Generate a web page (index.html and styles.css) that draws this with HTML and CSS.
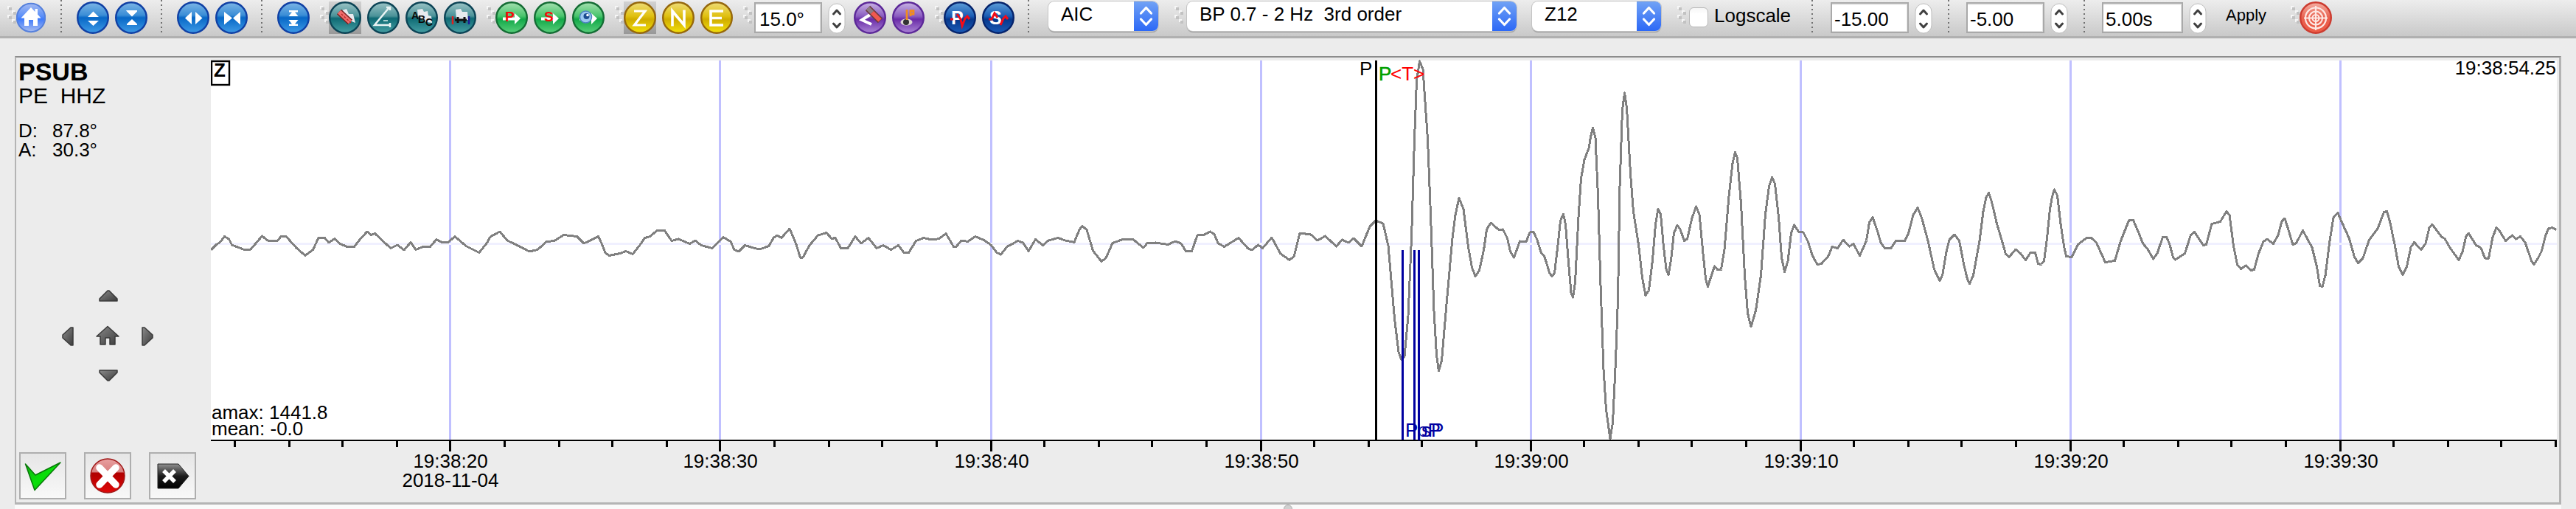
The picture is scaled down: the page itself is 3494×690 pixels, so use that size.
FILE: index.html
```
<!DOCTYPE html>
<html lang="en">
<head>
<meta charset="utf-8">
<title>PSUB - Picker</title>
<link rel="stylesheet" href="styles.css">
</head>
<body>
<svg class="defs" width="0" height="0" aria-hidden="true">
  <defs>
    <linearGradient id="gBlue" x1="0" y1="0" x2="0" y2="1"><stop offset="0" stop-color="#7db6e6"/><stop offset=".42" stop-color="#3a8dd6"/><stop offset=".5" stop-color="#0767c6"/><stop offset="1" stop-color="#3f9be6"/></linearGradient>
    <linearGradient id="gHome" x1="0" y1="0" x2="0" y2="1"><stop offset="0" stop-color="#a3baf2"/><stop offset=".45" stop-color="#5b8ff8"/><stop offset=".55" stop-color="#3f7bfb"/><stop offset="1" stop-color="#a9bdf0"/></linearGradient>
    <linearGradient id="gTeal" x1="0" y1="0" x2="0" y2="1"><stop offset="0" stop-color="#9cc4c6"/><stop offset=".45" stop-color="#4a9298"/><stop offset=".52" stop-color="#0e6a74"/><stop offset="1" stop-color="#47a0a4"/></linearGradient>
    <linearGradient id="gGreen" x1="0" y1="0" x2="0" y2="1"><stop offset="0" stop-color="#a5e0b0"/><stop offset=".45" stop-color="#48c46c"/><stop offset=".55" stop-color="#12a848"/><stop offset="1" stop-color="#5ad07c"/></linearGradient>
    <linearGradient id="gGold" x1="0" y1="0" x2="0" y2="1"><stop offset="0" stop-color="#eedc78"/><stop offset=".45" stop-color="#e0c010"/><stop offset=".55" stop-color="#d0ac00"/><stop offset="1" stop-color="#f4e20c"/></linearGradient>
    <linearGradient id="gPurple" x1="0" y1="0" x2="0" y2="1"><stop offset="0" stop-color="#c9b4e4"/><stop offset=".45" stop-color="#8a5cc0"/><stop offset=".55" stop-color="#6a2ca8"/><stop offset="1" stop-color="#ac86d6"/></linearGradient>
    <linearGradient id="gNavy" x1="0" y1="0" x2="0" y2="1"><stop offset="0" stop-color="#5e9ed8"/><stop offset=".45" stop-color="#1a5cb4"/><stop offset=".55" stop-color="#06388c"/><stop offset="1" stop-color="#1c5cb8"/></linearGradient>
    <linearGradient id="gRed" x1="0" y1="0" x2="0" y2="1"><stop offset="0" stop-color="#f5b0a4"/><stop offset=".5" stop-color="#e8604e"/><stop offset="1" stop-color="#ee5c46"/></linearGradient>
    <linearGradient id="gDark" x1="0" y1="0" x2="1" y2="1"><stop offset="0" stop-color="#8a8a8a"/><stop offset="1" stop-color="#3c3c3c"/></linearGradient>
    <linearGradient id="gCheck" x1="0" y1="0" x2="1" y2="1"><stop offset="0" stop-color="#12b012"/><stop offset=".5" stop-color="#08e008"/><stop offset="1" stop-color="#10a810"/></linearGradient>
    <linearGradient id="gStop" x1="0" y1="0" x2="0" y2="1"><stop offset="0" stop-color="#e8a0a0"/><stop offset=".38" stop-color="#d88080"/><stop offset=".42" stop-color="#b00000"/><stop offset="1" stop-color="#e00808"/></linearGradient>
    <linearGradient id="gTag" x1="0" y1="0" x2="0" y2="1"><stop offset="0" stop-color="#909090"/><stop offset=".5" stop-color="#1c1c1c"/><stop offset="1" stop-color="#000"/></linearGradient>
    <g id="gripDots">
      <path d="M0 0h4v4h-4zM6 6h4v4h-4zM0 12h4v4h-4zM6 18h4v4h-4z" fill="#f6f6f6"/>
      <path d="M2 2h4v4h-4zM8 8h4v4h-4zM2 14h4v4h-4zM8 20h4v4h-4z" fill="#c2c2c2"/>
    </g>
  </defs>
</svg>

<header class="toolbar">
  <svg class="grip grip-first" viewBox="0 0 12 24"><use href="#gripDots"/></svg>
  <svg class="icon icon-home" viewBox="2 0 40 44"><circle cx="22" cy="22" r="19.2" fill="url(#gHome)" stroke="#5580dc" stroke-width="2"/><path d="M22 8 8.500 22.500H13V33H19V25H25V33H31V22.500H35.500L31 17.500V10H27.500V14Z" fill="#fff"/></svg>
  <i class="sep sep-home"></i>
  <div class="group">
    <svg class="icon" viewBox="0 0 44 44"><circle cx="22" cy="22" r="20.800" fill="url(#gBlue)" stroke="#1040a4" stroke-width="2.400"/><path d="M15 21 22.500 13.500 30 21ZM15 26H30L22.500 33Z" fill="#fff"/></svg>
    <svg class="icon" viewBox="0 0 44 44"><circle cx="22" cy="22" r="20.800" fill="url(#gBlue)" stroke="#1040a4" stroke-width="2.400"/><path d="M15 12H30V13.500L23 20.500 16 13.500ZM23 24 30 30.500V32H16V30.500Z" fill="#fff"/></svg>
  </div>
  <i class="sep"></i>
  <div class="group">
    <svg class="icon" viewBox="0 0 44 44"><circle cx="22" cy="22" r="20.800" fill="url(#gBlue)" stroke="#1040a4" stroke-width="2.400"/><path d="M20 14V31L11 22.500ZM25 14 34.500 22.500 25 31Z" fill="#fff"/></svg>
    <svg class="icon" viewBox="0 0 44 44"><circle cx="22" cy="22" r="20.800" fill="url(#gBlue)" stroke="#1040a4" stroke-width="2.400"/><path d="M12 14 23 22.500 12 31.500ZM34 14 24 22.500 34 31.500Z" fill="#fff"/></svg>
  </div>
  <i class="sep"></i>
  <div class="group">
    <svg class="icon" viewBox="0 0 44 44"><circle cx="22" cy="22" r="20.800" fill="url(#gBlue)" stroke="#1040a4" stroke-width="2.400"/><path d="M16 12H28V14.500H24L28.500 20H15.500L20 14.500H16ZM15.500 25H28.500L24 30.500H28V33H16V30.500H20Z" fill="#fff"/></svg>
  </div>

  <svg class="grip" viewBox="0 0 12 24"><use href="#gripDots"/></svg>
  <div class="group">
    <span class="pressed"><svg class="icon" viewBox="0 0 44 44"><circle cx="22" cy="22" r="20.800" fill="url(#gTeal)" stroke="#0c4456" stroke-width="2.400"/><path d="M18 12 24 10 27 17 33 17 36 29 31 27 22 19Z" fill="#e8eaee"/><path d="M14 14 29 28" stroke="#7a2020" stroke-width="9"/><path d="M14 14 29 28" stroke="#f06c6c" stroke-width="6"/><path d="M17 17 30 29" stroke="#b82c2c" stroke-width="1.500" stroke-dasharray="3 2"/></svg></span>
    <svg class="icon" viewBox="0 0 44 44"><circle cx="22" cy="22" r="20.800" fill="url(#gTeal)" stroke="#0c4456" stroke-width="2.400"/><path d="M30 8 10 32H32M31 29V35M26 8H31V12" fill="none" stroke="#eaf4f4" stroke-width="2.500"/><path d="M22 26H28" stroke="#a8d0d0" stroke-width="2"/></svg>
    <svg class="icon" viewBox="0 0 44 44"><circle cx="22" cy="22" r="20.800" fill="url(#gTeal)" stroke="#0c4456" stroke-width="2.400"/><path d="M16 11 23 10 25 14 30 13 31 19 35 20 36 29 28 28 17 20Z" fill="#e8eaee"/><g class="glyph" font-size="14" fill="#0a0a0a"><text x="8" y="24">A</text><text x="17" y="29">B</text><text x="27" y="33">C</text></g></svg>
    <svg class="icon" viewBox="0 0 44 44"><circle cx="22" cy="22" r="20.800" fill="url(#gTeal)" stroke="#0c4456" stroke-width="2.400"/><path d="M16 11 23 10 25 14 32 14 33 25H17Z" fill="#e8eaee"/><path d="M15 25H31M19 21V29M28 21V29" stroke="#111" stroke-width="3"/><path d="M12 20V31" stroke="#e02020" stroke-width="2.500"/><path d="M34 20V31" stroke="#1c1c98" stroke-width="2.500"/></svg>
  </div>

  <svg class="grip" viewBox="0 0 12 24"><use href="#gripDots"/></svg>
  <div class="group">
    <svg class="icon" viewBox="0 0 44 44"><circle cx="22" cy="22" r="20.800" fill="url(#gGreen)" stroke="#146c34" stroke-width="2.400"/><path d="M10 21.500H26V16L34 23 26 31V25.500H10Z" fill="#fff"/><text class="glyph" x="13" y="27" font-size="19" fill="#f80808">P</text></svg>
    <svg class="icon" viewBox="0 0 44 44"><circle cx="22" cy="22" r="20.800" fill="url(#gGreen)" stroke="#146c34" stroke-width="2.400"/><path d="M10 21.500H26V16L34 23 26 31V25.500H10Z" fill="#fff"/><text class="glyph" x="14" y="27" font-size="19" fill="#f80808">S</text></svg>
    <svg class="icon" viewBox="0 0 44 44"><circle cx="22" cy="22" r="20.800" fill="url(#gGreen)" stroke="#146c34" stroke-width="2.400"/><path d="M10 21.500H26V16L34 23 26 31V25.500H10Z" fill="#fff"/><circle cx="18.500" cy="21" r="8" fill="#9cc8f0" stroke="#4c84c0" stroke-width="1.500"/><circle cx="19.500" cy="20" r="4" fill="#1c4c90"/><circle cx="21" cy="18.500" r="1.800" fill="#fff"/></svg>
  </div>

  <svg class="grip" viewBox="0 0 12 24"><use href="#gripDots"/></svg>
  <div class="group">
    <span class="pressed"><svg class="icon" viewBox="0 0 44 44"><circle cx="22" cy="22" r="20.800" fill="url(#gGold)" stroke="#96680c" stroke-width="2.400"/><path d="M14 13H29L14.500 32H30" fill="none" stroke="#fff" stroke-width="3.200"/></svg></span>
    <svg class="icon" viewBox="0 0 44 44"><circle cx="22" cy="22" r="20.800" fill="url(#gGold)" stroke="#96680c" stroke-width="2.400"/><path d="M14 33.500V13L30 32V11.500" fill="none" stroke="#fff" stroke-width="3.600"/></svg>
    <svg class="icon" viewBox="0 0 44 44"><circle cx="22" cy="22" r="20.800" fill="url(#gGold)" stroke="#96680c" stroke-width="2.400"/><path d="M31 13H14V32H31M14 22.500H29" fill="none" stroke="#fff" stroke-width="3.600"/></svg>
  </div>

  <svg class="grip" viewBox="0 0 12 24"><use href="#gripDots"/></svg>
  <div class="field field-angle">15.0°</div>
  <svg class="stepper stepper-angle" viewBox="0 0 24 42"><rect x="1" y="1" width="22" height="40" rx="11"/><path d="M7.500 15 12 10 16.500 15M7.500 28 12 33 16.500 28"/></svg>
  <div class="group group-rotate">
    <svg class="icon" viewBox="0 0 44 44"><circle cx="22" cy="22" r="20.800" fill="url(#gPurple)" stroke="#5c2898" stroke-width="2.400"/><path d="M22 18 11 25 24 31" fill="none" stroke="#fff" stroke-width="4"/><path d="M19 9 36 26" stroke="#6c3c40" stroke-width="9"/><path d="M19 9 25 15" stroke="#8c7c84" stroke-width="6"/><path d="M25 15 35.500 25.500" stroke="#f05850" stroke-width="6"/></svg>
    <svg class="icon" viewBox="0 0 44 44"><circle cx="22" cy="22" r="20.800" fill="url(#gPurple)" stroke="#5c2898" stroke-width="2.400"/><ellipse cx="19.500" cy="28" rx="8" ry="4.500" fill="#ded8d4"/><circle cx="19" cy="28" r="4" fill="#333"/><path d="M20 11V25M25 11V20M25 12.500H29V17H25" fill="none" stroke="#f08c20" stroke-width="2.800"/></svg>
  </div>

  <svg class="grip" viewBox="0 0 12 24"><use href="#gripDots"/></svg>
  <div class="group">
    <svg class="icon" viewBox="0 0 44 44"><circle cx="22" cy="22" r="20.800" fill="url(#gNavy)" stroke="#06246c" stroke-width="2.400"/><text class="glyph" x="10" y="31" font-size="25" fill="#fff">P</text><path d="M9 24H13M18 17 23 24 25 33 29 23 32 20 35 24" fill="none" stroke="#f40c18" stroke-width="3"/></svg>
    <svg class="icon" viewBox="0 0 44 44"><circle cx="22" cy="22" r="20.800" fill="url(#gNavy)" stroke="#06246c" stroke-width="2.400"/><text class="glyph" x="10" y="31" font-size="25" fill="#fff">S</text><path d="M9 24H13L17 16 21 22M25 32 29 23 32 20 35 24" fill="none" stroke="#f40c18" stroke-width="3"/></svg>
  </div>
  <i class="sep"></i>
  <div class="combo combo-picker"><span class="combo-text">AIC</span><svg class="combo-arrows" viewBox="0 0 33 39"><path d="M9.500 15.500 16.500 8 23.500 15.500M9.500 23.500 16.500 31 23.500 23.500"/></svg></div>
  <svg class="grip grip-filter" viewBox="0 0 12 24"><use href="#gripDots"/></svg>
  <div class="combo combo-filter"><span class="combo-text">BP 0.7 - 2 Hz&nbsp; 3rd order</span><svg class="combo-arrows" viewBox="0 0 33 39"><path d="M9.500 15.500 16.500 8 23.500 15.500M9.500 23.500 16.500 31 23.500 23.500"/></svg></div>
  <div class="combo combo-rotation"><span class="combo-text">Z12</span><svg class="combo-arrows" viewBox="0 0 33 39"><path d="M9.500 15.500 16.500 8 23.500 15.500M9.500 23.500 16.500 31 23.500 23.500"/></svg></div>
  <svg class="grip grip-scale" viewBox="0 0 12 24"><use href="#gripDots"/></svg>
  <span class="checkbox"></span>
  <span class="check-label">Logscale</span>
  <i class="sep sep-range"></i>
  <div class="field field-range">-15.00</div>
  <svg class="stepper" viewBox="0 0 24 42"><rect x="1" y="1" width="22" height="40" rx="11"/><path d="M7.500 15 12 10 16.500 15M7.500 28 12 33 16.500 28"/></svg>
  <i class="sep sep-range-next"></i>
  <div class="field field-range">-5.00</div>
  <svg class="stepper" viewBox="0 0 24 42"><rect x="1" y="1" width="22" height="40" rx="11"/><path d="M7.500 15 12 10 16.500 15M7.500 28 12 33 16.500 28"/></svg>
  <i class="sep sep-range-next"></i>
  <div class="field field-window">5.00s</div>
  <svg class="stepper" viewBox="0 0 24 42"><rect x="1" y="1" width="22" height="40" rx="11"/><path d="M7.500 15 12 10 16.500 15M7.500 28 12 33 16.500 28"/></svg>
  <span class="apply">Apply</span>
  <svg class="grip grip-target" viewBox="0 0 12 24"><use href="#gripDots"/></svg>
  <svg class="icon" viewBox="0 0 44 44"><circle cx="22" cy="22" r="20.800" fill="url(#gRed)" stroke="#cc3c30" stroke-width="2.400"/><g fill="none" stroke="#fde8e4" stroke-width="2.200"><circle cx="22" cy="22.500" r="14"/><circle cx="22" cy="22.500" r="9"/><circle cx="22" cy="22.500" r="4.500"/><path d="M22 6V39M6 22.500H38"/></g></svg>
</header>

<main class="panel">
  <aside class="station">
    <div class="station-name">PSUB</div>
    <div class="station-channel">PE&nbsp; HHZ</div>
    <dl class="station-info">
      <dt>D:</dt><dd>87.8°</dd>
      <dt>A:</dt><dd>30.3°</dd>
    </dl>
    <svg class="navpad" viewBox="0 0 124 124" fill="url(#gDark)" stroke="#3a3a3a" stroke-width="1.500" stroke-linejoin="round">
      <path d="M62 1H64L75 12V15H51V12Z"/>
      <path d="M15 51V75H12L1 65V61L12 51Z"/>
      <path d="M109 51H112L123 61V65L112 75H109Z"/>
      <path d="M51 109H75V112L64 123H62L51 112Z"/>
      <path d="M62 49.500 47 63H52V74H59V65H65V74H72V63H77Z"/>
    </svg>
    <div class="actions">
      <button class="action"><svg viewBox="0 0 60 60"><path d="M6.500 14 20 29 54 12 19 49.500Z" fill="url(#gCheck)" stroke="#087808" stroke-width="1.500" stroke-linejoin="round"/></svg></button>
      <button class="action"><svg viewBox="0 0 60 60"><circle cx="30" cy="30" r="23" fill="url(#gStop)" stroke="#a01818" stroke-width="1.500"/><path d="M19 19 41 42M41 19 19 42" stroke="#fff" stroke-width="9.500" stroke-linecap="round"/></svg></button>
      <button class="action"><svg viewBox="0 0 60 60"><path d="M10 14H38L52 30.500 38 47H10Z" fill="url(#gTag)" stroke="#222" stroke-width="1"/><path d="M18 23 33 38M33 23 18 38" stroke="#fff" stroke-width="5.500"/></svg></button>
    </div>
  </aside>

  <svg class="plot" viewBox="286 78 3185 603">
    <rect x="286" y="82" width="3182" height="514" fill="#fff"/>
    <path class="crisp" fill="#c0c0ff" d="M609 82h3v514h-3zM975 82h3v514h-3zM1343 82h3v514h-3zM1709 82h3v514h-3zM2075 82h3v514h-3zM2441 82h3v514h-3zM2807 82h3v514h-3zM3173 82h3v514h-3z"/>
    <rect class="crisp" x="286" y="329" width="3182" height="3" fill="#f0f0ff"/>
    <polyline class="trace" points="286,339 294,331 298,329 304.500,320.500 310.500,324 314.500,332 330,338 340,338 355.500,320 363,326 377,326 381,320.500 388,320.500 402.500,336.500 414,346.500 424.500,338.500 432,322.500 440,322 446,329 454,323.500 461,330.500 471,334.500 480.500,334.500 489,323.500 498,314 503,318.500 508.500,316.500 519,326.500 530,336.500 539,332 548,339 557,328.500 564,338.500 573.500,334.500 583.500,334.500 592,324.500 599,328.500 608,328.500 617,320.500 632,333.500 650,342.500 660,330 665,321 678,314 688,326 703.500,333.500 718,341 729,338.500 741.500,327.500 752,326.500 764.500,318.500 782.500,320.500 792,330 800.500,326 811.500,320.500 816,330 821,342.500 826,346.500 841,343.500 849,340.500 858,344.500 867,333.500 874.500,322.500 882,320.500 891,312.500 901.500,312.500 911,326.500 920.500,324 935.500,330.500 943,326 951,332.500 966,336.500 981,321.500 991,327.500 996,338.500 1002,341 1010.500,332.500 1020,335.500 1030,338 1043,333.500 1049,322.500 1054,319 1060,322.500 1071,310 1079.500,330 1085.500,349 1089,349 1098,332.500 1109.500,319 1121,315.500 1128,323.500 1133,322.500 1140.500,336.500 1150,336.500 1160,320.500 1168,330 1178,322.500 1189,336.500 1198,332.500 1208.500,338.500 1218.500,332.500 1226,342.500 1232.500,342.500 1242.500,326.500 1253,322.500 1264,325 1274,323.500 1283,316.500 1293.500,334.500 1297,334.500 1304,326 1312.500,327.500 1323,320.500 1335.500,326 1344.500,332.500 1352,342.500 1357.500,345 1366,334.500 1380.500,326.500 1387.500,329 1395,340.500 1404.500,324.500 1414.500,332.500 1421,326.500 1435,322.500 1445,326 1457,328.500 1464,311.500 1468,306.500 1474,311.500 1482.500,340 1494,354.500 1500,350 1509,329.500 1523,324.500 1537,324.500 1551,336 1556,329.500 1567.500,329 1584.500,331.500 1594,327 1602,330 1608.500,340.500 1616.500,340.500 1624,319 1632.500,318.500 1641.500,314 1647,317.500 1652,329.500 1660.500,334.500 1680,322.500 1692.500,336.500 1698,339 1706.500,332 1712.500,336.500 1725,322 1736.500,343.500 1749,352.500 1755,348 1763,316 1778,318 1787,326 1797.500,320 1812.500,334 1820.500,325 1829,329 1836,323 1847,334 1858,307 1866,299 1876,303 1883,333 1891.500,432 1897,477 1901,488 1905,483 1910,428 1914.500,323 1918.500,189 1921.500,109.500 1925.500,83 1930,94 1936.500,189 1940.500,291 1945,422 1948.500,481 1951.500,503 1955.500,489 1961.500,418 1970,323 1974,291.500 1979,268.500 1985,283.500 1991.500,335 1996.500,362.500 2001,374.500 2006.500,366.500 2012.500,339 2016.500,311 2022,302 2033.500,312 2038.500,311 2044.500,323 2048.500,341 2053.500,349 2061.500,327 2070,328 2075,315 2080,314.500 2085,325 2090,342 2095,348 2101.500,369.500 2105,375 2108.500,370 2113.500,328 2116.500,299 2120.500,290.500 2123.500,304 2127.500,356 2131,397 2133.500,403 2136.500,383 2141,294 2144.500,242 2149,216.500 2155,201 2157.500,185.500 2160.500,173.500 2164,187 2167.500,266 2171,387 2175,500.500 2178.500,555.500 2184,594.500 2187.500,573 2191.500,488.500 2194.500,406 2197,252.500 2200.500,149 2203.500,126 2206.500,146 2211.500,235 2215.500,287 2222.500,331.500 2227.500,376.500 2232,400.500 2236.500,393.500 2241.500,352.500 2245.500,304 2249,283.500 2252.500,290.500 2256.500,335 2260,364.500 2263,373 2266.500,352.500 2270.500,316 2275,305 2279,311 2284.500,326.500 2288.500,324 2295,295.500 2300.500,280 2305,290.500 2309.500,338.500 2313.500,378 2316.500,388.500 2321.500,373 2325.500,361 2330,366 2334.500,365.500 2339,338.500 2345,266 2350,221.500 2353.500,206.500 2356.500,214.500 2361.500,276.500 2366.500,373 2370.500,424.500 2375,443 2381.500,421 2388.500,373 2394.500,290.500 2399.500,252.500 2403.500,240.500 2407.500,249 2412.500,294 2416.500,349 2420.500,368.500 2425,354 2429.500,316 2433.500,305 2440,314.500 2446,315 2452.500,328 2458.500,347 2465,358.500 2470.500,357.500 2479.500,348 2485,334.500 2492.500,336.500 2500,325 2508.500,334 2514,330.500 2522.500,346.500 2531.500,326.500 2535.500,301.500 2540,294.500 2546.500,313.500 2551.500,330 2556.500,336.500 2565,336.500 2571.500,326.500 2583.500,326.500 2588.500,316.500 2595,291.500 2601,281.500 2606.500,295 2615,326.500 2623.500,365 2631,381 2635,371.500 2640,341.500 2644,325 2651,318 2657.500,326.500 2664,360 2668.500,378.500 2671.500,384.500 2676.500,373.500 2685,326.500 2690,286.500 2694,267.500 2697.500,261.500 2701.500,273.500 2708.500,303.500 2716.500,330 2720.500,344.500 2725,348.500 2734,338 2740.500,343.500 2747.500,352.500 2754,342.500 2760.500,342.500 2764.500,357.500 2768.500,358.500 2772.500,353.500 2776.500,323.500 2780.500,283.500 2783.500,266.500 2786.500,257 2790.500,265 2795,303.500 2799.500,333.500 2802.500,347.500 2810,348.500 2818.500,331.500 2830,322.500 2836.500,322.500 2843.500,329 2855.500,355.500 2868.500,353.500 2876.500,326.500 2887.500,299 2893.500,298.500 2900,313.500 2906.500,330 2913.500,338.500 2920.500,351 2926,343.500 2933.500,321.500 2938.500,321.500 2942.500,330 2947.500,348.500 2950.500,352 2963.500,343.500 2971.500,318.500 2976.500,314.500 2988.500,332.500 2992.500,331.500 3000,303.500 3011.500,300.500 3020,286.500 3024,291.500 3029.500,333.500 3034.500,358.500 3039.500,364.500 3046.500,360 3053.500,366.500 3057.500,365.500 3063.500,343.500 3070,327.500 3075,324 3083.500,330.500 3090,318.500 3095,300 3099,296 3105,315 3110,332 3114.500,329.500 3123.500,312.500 3136,335.500 3142.500,361.500 3146.500,387.500 3150,388.500 3154,373.500 3160,326.500 3165,295 3171,288.500 3176.500,301.500 3186.500,323.500 3193.500,348.500 3198.500,356.500 3205,350 3213.500,325 3225,310 3233.500,287.500 3237.500,286.500 3241.500,300 3248.500,333.500 3253.500,361.500 3259,372.500 3264.500,361.500 3270,335 3274.500,328.500 3284,338.500 3290,330 3295,308.500 3299,304 3311.500,321 3316,323.500 3323.500,336.500 3335,352.500 3340,341.500 3345,320 3348.500,316.500 3358.500,332.500 3365,336 3370.500,350 3375.500,350 3381,321.500 3386,308.500 3390,312.500 3398.500,326.500 3407.500,319 3412.500,324 3418.500,320.500 3425,328.500 3433.500,353.500 3437,358.500 3442.500,350 3447.500,340 3452.500,320 3456.500,310 3461.500,308.500 3467.500,311.500"/>
    <path class="crisp" fill="#000" d="M1865 82h3v514h-3zM286 596h3182v2h-3182z"/>
    <path class="crisp" fill="#0000a0" d="M1901 339h3v257h-3zM1917 339h3v257h-3zM1923 339h3v257h-3z"/>
    <path class="crisp ticks" d="M610.500 598v14M976.500 598v14M1344.500 598v14M1710.500 598v14M2076.500 598v14M2442.500 598v14M2808.500 598v14M3174.500 598v14M318.500 598v8M392.500 598v8M464.500 598v8M538.500 598v8M684.500 598v8M758.500 598v8M830.500 598v8M904.500 598v8M1050.500 598v8M1124.500 598v8M1196.500 598v8M1270.500 598v8M1416.500 598v8M1490.500 598v8M1562.500 598v8M1636.500 598v8M1782.500 598v8M1856.500 598v8M1928.500 598v8M2002.500 598v8M2148.500 598v8M2222.500 598v8M2294.500 598v8M2368.500 598v8M2514.500 598v8M2588.500 598v8M2660.500 598v8M2734.500 598v8M2880.500 598v8M2954.500 598v8M3026.500 598v8M3100.500 598v8M3246.500 598v8M3320.500 598v8M3392.500 598v8M3466.500 598v8"/>
    <rect x="287" y="83" width="24" height="32" fill="#fff" stroke="#000" stroke-width="2.400"/>
    <text class="bold" x="290" y="104">Z</text>
    <text x="287" y="568">amax: 1441.8</text>
    <text x="287" y="590">mean: -0.0</text>
    <text x="3467" y="101" text-anchor="end">19:38:54.25</text>
    <text x="1844" y="101.500">P</text>
    <text class="pick-green" x="1870" y="109">P</text>
    <text class="pick-red" x="1886" y="109">&lt;T&gt;</text>
    <g class="phases"><text x="1906" y="592">P</text><text x="1922" y="592">pP</text><text x="1928" y="592">sP</text></g>
    <g text-anchor="middle">
      <text x="611" y="634">19:38:20</text>
      <text x="611" y="660">2018-11-04</text>
      <text x="977" y="634">19:38:30</text>
      <text x="1345" y="634">19:38:40</text>
      <text x="1711" y="634">19:38:50</text>
      <text x="2077" y="634">19:39:00</text>
      <text x="2443" y="634">19:39:10</text>
      <text x="2809" y="634">19:39:20</text>
      <text x="3175" y="634">19:39:30</text>
    </g>
  </svg>
</main>
<footer class="splitter"><span class="splitter-knob"></span></footer>
</body>
</html>
```

FILE: styles.css
```
* { box-sizing: border-box; }

body {
  margin: 0;
  width: 3494px;
  height: 690px;
  overflow: hidden;
  background: #ececec;
  color: #000;
  font: 26px/1 "Liberation Sans", Arial, sans-serif;
}

.defs { display: block; height: 0; }

/* Toolbar */
.toolbar {
  display: flex;
  align-items: flex-start;
  height: 52px;
  padding: 2px 0 0 10px;
  background: linear-gradient(#ededed, #c9c9c9 49px);
  border-bottom: 3px solid #b0b0b0;
  white-space: nowrap;
}
.toolbar > * { flex: none; }

.group { display: flex; gap: 8px; }
.icon { display: block; width: 44px; height: 44px; }
.icon-home { width: 40px; }
.pressed { background: linear-gradient(#d2d2d2, #989898); }
.glyph { font-family: "Liberation Sans", Arial, sans-serif; font-weight: bold; }

.grip { width: 12px; height: 24px; margin: 6px 0 0 14px; }
.grip-first { margin-left: 0; }
.grip-filter { margin-left: 22px; }
.grip-scale { margin-left: 22px; }
.grip-target { margin-left: 32px; }

.sep {
  width: 2px;
  height: 44px;
  margin: -2px 20px 0 18px;
  background: repeating-linear-gradient(#707070 0 2px, transparent 2px 6px);
}
.sep-home { margin-left: 20px; }

.field {
  height: 42px;
  margin-top: 1px;
  padding: 8px 0 0 5px;
  background: #fff;
  border: 2px solid #a9a9a9;
  box-shadow: inset 0 2px #e9e9e9, inset -1px -1px #e4e4e4;
}
.field-angle { width: 92px; margin-left: 3px; }
.field-range { width: 106px; padding-left: 3px; }
.field-window { width: 110px; padding-left: 3px; }

.stepper { width: 24px; height: 42px; margin: 2px 0 0 8px; overflow: visible; }
.stepper rect { fill: #fff; stroke: #bdbdbd; stroke-width: 1; }
.stepper path {
  fill: none;
  stroke: #404040;
  stroke-width: 3;
  stroke-linecap: round;
  stroke-linejoin: round;
}
.group-rotate { margin-left: 11px; }

.combo {
  display: flex;
  height: 40px;
  justify-content: space-between;
  border-radius: 8px;
  background: #fff;
  box-shadow: 0 0 0 1px #c4c4c4, 0 2px 1px #999;
  overflow: hidden;
}
.combo-text { padding: 4px 0 0 17px; }
.combo-arrows { width: 33px; height: 40px; background: linear-gradient(#71a2f5, #2c68f6); }
.combo-arrows path {
  fill: none;
  stroke: #fff;
  stroke-width: 3.200;
  stroke-linecap: round;
  stroke-linejoin: round;
}
.combo-picker { width: 149px; margin-left: 6px; }
.combo-filter { width: 447px; margin-left: 5px; }
.combo-rotation { width: 175px; margin-left: 21px; }

.checkbox {
  width: 26px;
  height: 27px;
  margin: 8px 0 0 4px;
  border: 1px solid #b8b8b8;
  border-radius: 6px;
  background: linear-gradient(#f6f6f6, #fff 8px);
}
.check-label { width: 104px; margin: 6px 0 0 8px; }
.sep-range { margin: -2px 24px 0 28px; }
.sep-range-next { margin: -2px 23px 0 21px; }
.apply { width: 56px; margin: 8px 0 0 26px; font-size: 22px; }

/* Trace panel */
.panel {
  display: flex;
  width: 3454px;
  height: 608px;
  margin: 24px 20px 0;
  border: solid #b4b4b4;
  border-width: 2px 3px 3px 2px;
  border-top-color: #8c8c8c;
}
.station { width: 264px; padding-top: 2px; }
.station-name { padding-left: 3px; font-size: 34px; font-weight: bold; line-height: 34px; }
.station-channel { padding-left: 3px; font-size: 30px; line-height: 31px; }
.station-info {
  display: grid;
  grid-template-columns: 46px auto;
  margin: 19px 0 0 3px;
  line-height: 26px;
}
.station-info dd { margin: 0; }
.navpad { display: block; width: 124px; height: 124px; margin: 177px 0 0 62px; }
.actions { display: flex; gap: 24px; margin: 96px 0 0 4px; }
.action {
  width: 64px;
  height: 64px;
  padding: 0;
  border: 2px solid #aeaeae;
  background: linear-gradient(#e6e6e6, #f8f8f8);
}
.action svg { display: block; width: 60px; height: 60px; }

.plot { display: block; width: 3185px; height: 603px; }
.plot text { white-space: pre; }
.crisp { shape-rendering: crispEdges; }
.trace {
  fill: none;
  stroke: #808080;
  stroke-width: 3;
  stroke-linejoin: round;
  shape-rendering: crispEdges;
}
.ticks { stroke: #000; stroke-width: 3; }
.bold { font-weight: bold; }
.pick-green { fill: #00a000; stroke: #00a000; stroke-width: .6; }
.pick-red { fill: #f00; }
.phases { fill: #0000a0; }

/* Splitter below the panel */
.splitter {
  display: flex;
  justify-content: center;
  height: 6px;
  margin: 0 20px;
  background: #fafafa;
  overflow: hidden;
}
.splitter-knob {
  flex: none;
  width: 12px;
  height: 12px;
  border: 1px solid #b0b0b0;
  border-radius: 50%;
  background: #d0d0d0;
}
```
